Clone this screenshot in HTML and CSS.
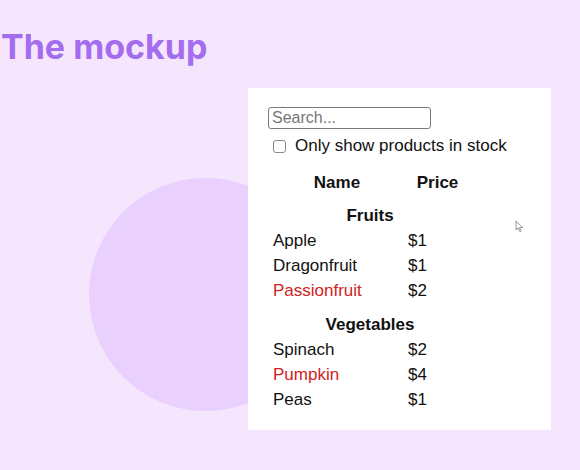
FILE: index.html
```html
<!DOCTYPE html>
<html>
<head>
<meta charset="utf-8">
<link rel="stylesheet" href="styles.css">
</head>
<body>
<h1 class="title">The mockup</h1>
<main class="stage">
  <div class="blob"></div>
  <section class="panel">
    <input class="search" type="text" placeholder="Search...">
    <label class="stock">
      <input class="check" type="checkbox">
      <span>Only show products in stock</span>
    </label>
    <div class="table">
      <div class="th">Name</div>
      <div class="th">Price</div>
      <div class="cat">Fruits</div>
      <div class="td">Apple</div><div class="td">$1</div>
      <div class="td">Dragonfruit</div><div class="td">$1</div>
      <div class="td out">Passionfruit</div><div class="td">$2</div>
      <div class="cat cat2">Vegetables</div>
      <div class="td">Spinach</div><div class="td">$2</div>
      <div class="td out">Pumpkin</div><div class="td">$4</div>
      <div class="td">Peas</div><div class="td">$1</div>
    </div>
  </section>
  <svg class="cursor" width="9" height="13" viewBox="0 0 9 13"><path d="M1 1 L1 10 L3.2 8 L4.8 11.5 L6 11 L4.5 7.6 L7.5 7.5 Z" fill="#fff" stroke="#8a8a8a" stroke-width="0.9" stroke-linejoin="round"/></svg>
</main>
</body>
</html>
```
FILE: styles.css
```css
html, body {
  margin: 0;
  padding: 0;
}
body {
  background: #f5e6fe;
  width: 580px;
  height: 470px;
  overflow: hidden;
  font-family: "Liberation Sans", Arial, sans-serif;
  color: #111;
}
.title {
  margin: 0;
  padding: 27px 0 0 1px;
  font-family: Inter, "Liberation Sans", sans-serif;
  font-weight: 700;
  font-size: 34px;
  line-height: 40px;
  color: #a46df0;
  letter-spacing: 0;
}
.stage {
  position: relative;
  padding: 21px 0 0 248px;
}
.blob {
  position: absolute;
  left: 89px;
  top: 111px;
  width: 233px;
  height: 233px;
  border-radius: 50%;
  background: #e9d0fd;
}
.panel {
  position: relative;
  width: 303px;
  height: 342px;
  box-sizing: border-box;
  background: #fff;
  padding: 19px 20px 0 20px;
  display: flex;
  flex-direction: column;
  align-items: flex-start;
}
.search {
  box-sizing: border-box;
  width: 163px;
  height: 22px;
  margin: 0;
  padding: 1px 3px;
  border: 1px solid #7a7a7a;
  border-radius: 3px;
  font-family: "Liberation Sans", Arial, sans-serif;
  font-size: 16px;
  color: #111;
  background: #fff;
}
.search::placeholder {
  color: #777;
}
.stock {
  display: flex;
  align-items: center;
  height: 20px;
  margin-top: 7px;
  font-size: 17px;
}
.check {
  width: 13px;
  height: 13px;
  margin: 0 9px 0 5px;
  appearance: none;
  border: 1px solid #8a8a8a;
  border-radius: 3px;
  background: #fff;
  box-sizing: border-box;
}
.table {
  display: grid;
  grid-template-columns: 128px 59px;
  column-gap: 7px;
  margin: 14px 0 0 5px;
  font-size: 17px;
  line-height: 25px;
}
.th {
  font-weight: 700;
  text-align: center;
}
.cat {
  grid-column: 1 / 3;
  font-weight: 700;
  text-align: center;
  padding-top: 8px;
}
.cat2 {
  padding-top: 9px;
}
.out {
  color: #d32222;
}
.cursor {
  position: absolute;
  left: 515px;
  top: 153px;
}
```
